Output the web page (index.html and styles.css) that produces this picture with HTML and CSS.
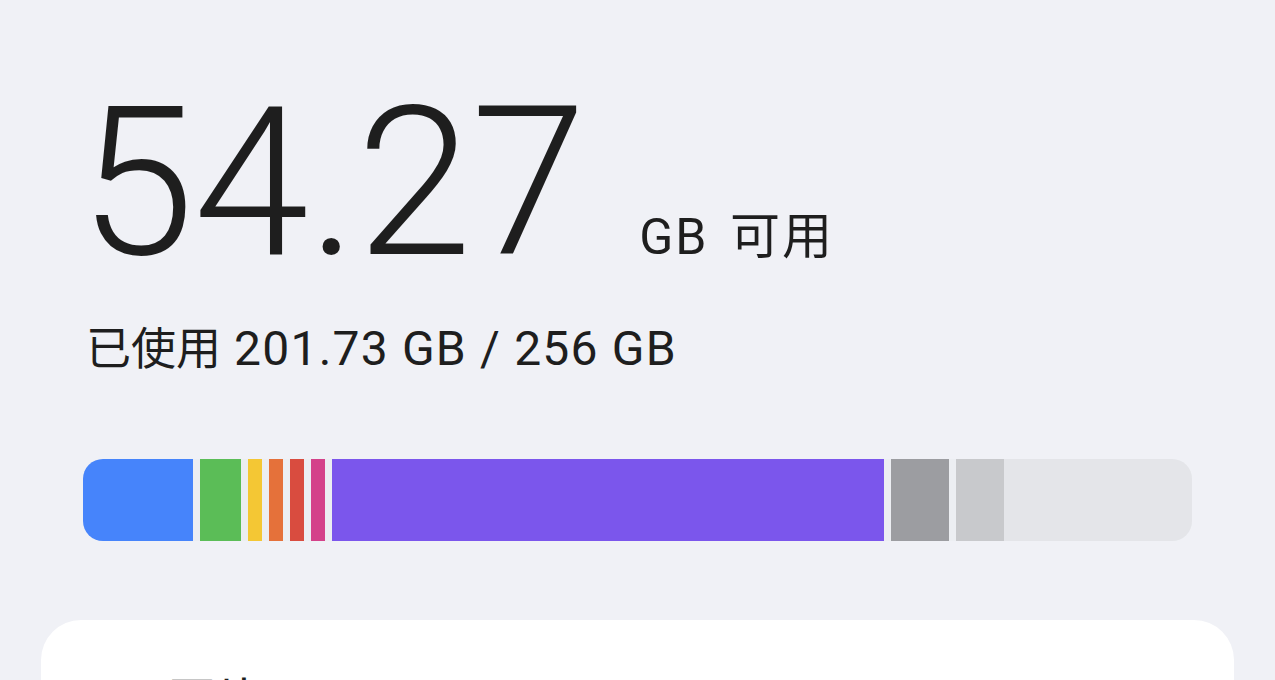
FILE: index.html
```html
<!DOCTYPE html>
<html lang="zh-CN">
<head>
    <meta charset="UTF-8">
    <meta name="viewport" content="width=device-width, initial-scale=1.0">
    <title>存储</title>
    <link rel="stylesheet" href="styles.css">
</head>
<body>
    <div class="page">
        <div class="summary">
            <div class="headline">
                <span class="free">54.27</span>
                <span class="free-unit">GB 可用</span>
            </div>
            <div class="used"><span class="used-label">已使用</span> 201.73 GB / 256 GB</div>

            <div class="bar">
                <div class="seg seg-blue"></div>
                <div class="seg seg-green"></div>
                <div class="seg seg-yellow"></div>
                <div class="seg seg-orange"></div>
                <div class="seg seg-red"></div>
                <div class="seg seg-pink"></div>
                <div class="seg seg-purple"></div>
                <div class="seg seg-gray"></div>
                <div class="seg seg-light"></div>
                <div class="seg seg-free"></div>
            </div>
        </div>

        <div class="card">
            <div class="card-title">图片</div>
        </div>
    </div>
</body>
</html>
```

FILE: styles.css
```css
* {
    margin: 0;
    padding: 0;
    box-sizing: border-box;
}

html, body {
    height: 100%;
    overflow: hidden;
}

body {
    background-color: #f0f1f6;
    color: #1e1e1e;
    font-family: Roboto, "Noto Sans CJK SC", sans-serif;
}

.page {
    padding: 0 41px;
}

.summary {
    padding: 83px 42px 0;
}

.headline {
    display: flex;
    align-items: baseline;
    height: 200px;
}

.free {
    font-size: 208px;
    font-weight: 300;
    line-height: 200px;
    letter-spacing: -1px;
    margin-left: -4px;
}

.free-unit {
    font-size: 50px;
    word-spacing: 7px;
    letter-spacing: 2px;
    margin-left: 54px;
}

.used {
    font-size: 48px;
    line-height: 56px;
    letter-spacing: 1.2px;
    margin-top: 38px;
    margin-left: 3px;
}

.used-label {
    font-size: 45px;
    letter-spacing: 0;
}

.bar {
    display: flex;
    gap: 7px;
    height: 82px;
    margin-top: 81px;
    border-radius: 20px;
    overflow: hidden;
    background-color: #eceef2;
}

.seg {
    height: 100%;
}

.seg-blue { width: 110px; background-color: #4684fb; }
.seg-green { width: 41px; background-color: #5bbd57; }
.seg-yellow { width: 14px; background-color: #f4c734; }
.seg-orange { width: 14px; background-color: #e5713a; }
.seg-red { width: 14px; background-color: #d94c3f; }
.seg-pink { width: 14px; background-color: #d4428a; }
.seg-purple { width: 552px; background-color: #7b56ec; }
.seg-gray { width: 58px; background-color: #9c9da1; }
.seg-light { width: 48px; background-color: #c8c9cc; }

.seg-free {
    flex: 1;
    margin-left: -7px;
    background-color: #e4e5e9;
}

.card {
    margin-top: 79px;
    height: 300px;
    background-color: #ffffff;
    border-radius: 40px;
    padding: 52px 0 0 127px;
}

.card-title {
    font-size: 48px;
    line-height: 60px;
}
```
